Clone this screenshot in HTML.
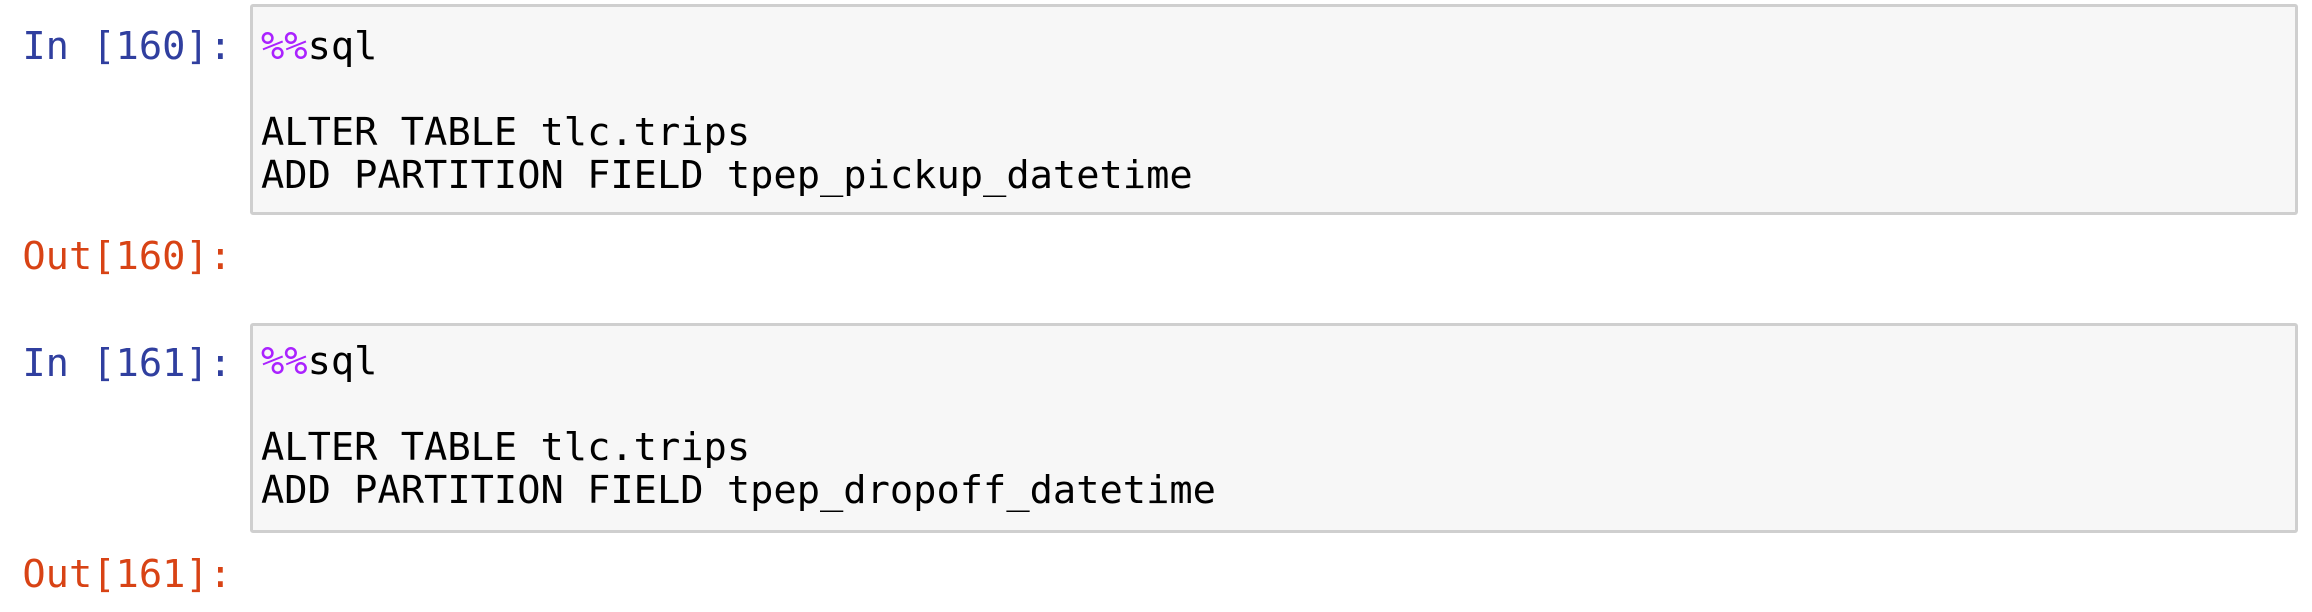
<!DOCTYPE html>
<html><head><meta charset="utf-8"><style>
html,body{margin:0;padding:0;background:#fff;width:2312px;height:612px;overflow:hidden;position:relative}
.t{position:absolute;font-family:"DejaVu Sans Mono","Liberation Mono",monospace;font-size:38.7px;line-height:43px;white-space:pre;color:#000}
.lbl{position:absolute;font-family:"DejaVu Sans Mono","Liberation Mono",monospace;font-size:38.7px;line-height:43px;white-space:pre;text-align:right;right:2080px}
.in{color:#303F9F}.out{color:#D84315}
.box{position:absolute;left:250px;width:2042px;background:#f7f7f7;border:3px solid #cfcfcf;border-radius:3px}
.m{color:#AA22FF}
</style></head><body>
<div class="box" style="top:4px;height:205px"></div>
<div class="box" style="top:323px;height:204px"></div>
<div class="lbl in" style="top:25px">In [160]:</div>
<div class="lbl out" style="top:235px">Out[160]:</div>
<div class="lbl in" style="top:342px">In [161]:</div>
<div class="lbl out" style="top:553px">Out[161]:</div>
<div class="t" style="left:261px;top:25px"><span class="m">%%</span>sql

ALTER TABLE tlc.trips
ADD PARTITION FIELD tpep_pickup_datetime</div>
<div class="t" style="left:261px;top:340px"><span class="m">%%</span>sql

ALTER TABLE tlc.trips
ADD PARTITION FIELD tpep_dropoff_datetime</div>
</body></html>
